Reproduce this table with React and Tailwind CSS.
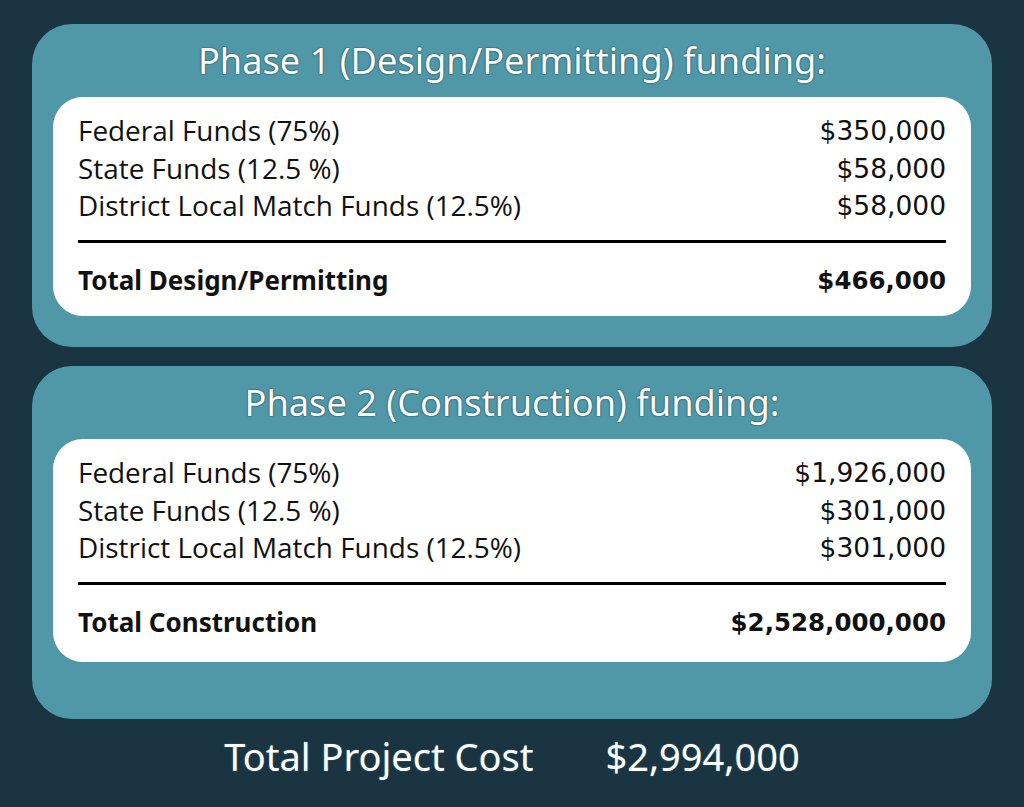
import React from "react"

const phases = [
  {
    title: "Phase 1 (Design/Permitting) funding:",
    rows: [
      ["Federal Funds (75%)", "$350,000"],
      ["State Funds (12.5 %)", "$58,000"],
      ["District Local Match Funds (12.5%)", "$58,000"],
    ],
    total: ["Total Design/Permitting", "$466,000"],
    pad: "pb-[31px]",
    cardPad: "pb-[17px]",
  },
  {
    title: "Phase 2 (Construction) funding:",
    rows: [
      ["Federal Funds (75%)", "$1,926,000"],
      ["State Funds (12.5 %)", "$301,000"],
      ["District Local Match Funds (12.5%)", "$301,000"],
    ],
    total: ["Total Construction", "$2,528,000,000"],
    pad: "pb-[57px]",
    cardPad: "pb-[21px]",
  },
]

const Phase = ({ phase }) => (
  <div className={`bg-[#5098a8] rounded-[40px] px-[21px] ${phase.pad}`}>
    <div className="h-[73px] flex items-center justify-center text-white text-[36.2px] [text-shadow:0_0_2px_#1d4a56,0_0_1px_#1d4a56]">
      {phase.title}
    </div>
    <div className={`bg-white rounded-[30px] px-[25px] pt-[15px] ${phase.cardPad} text-[#111] leading-[37.5px]`}>
      {phase.rows.map(([label, amount]) => (
        <div key={label} className="flex justify-between items-center">
          <span className="text-[27.9px] [font-family:'Open_Sans',sans-serif]">{label}</span>
          <span className="text-[26.5px] [font-family:'DejaVu_Sans',sans-serif]">{amount}</span>
        </div>
      ))}
      <div className="mt-[15px] mb-[19px] h-[3px] bg-black" />
      <div className="flex justify-between items-center font-bold">
        <span className="text-[26px]">{phase.total[0]}</span>
        <span className="text-[24.5px] [font-family:'DejaVu_Sans',sans-serif]">{phase.total[1]}</span>
      </div>
    </div>
  </div>
)

const App = () => {
  return (
    <div className="w-[1024px] h-[807px] bg-[#1b3441] px-[32px] pt-[24px] [font-family:'Noto_Sans',sans-serif] flex flex-col">
      <div className="flex flex-col gap-[19px]">
        {phases.map((p) => (
          <Phase key={p.title} phase={p} />
        ))}
      </div>
      <div className="flex-1 flex items-center justify-center gap-[72px] text-white text-[38px] pb-[14px] [text-shadow:0_0_2px_#2f6b78]">
        <span>Total Project Cost</span>
        <span>$2,994,000</span>
      </div>
    </div>
  )
}

export default App
